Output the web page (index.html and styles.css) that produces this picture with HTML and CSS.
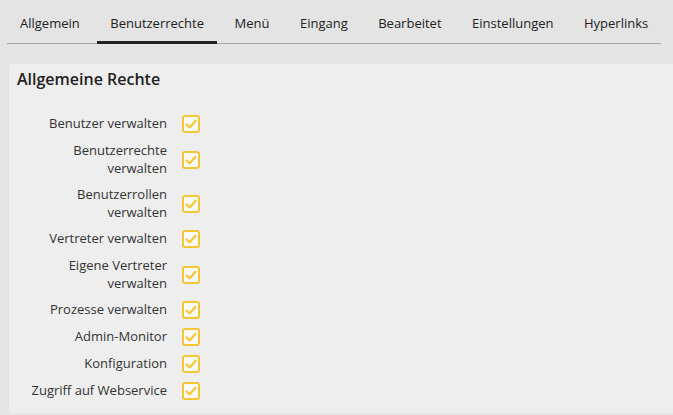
FILE: index.html
```html
<!DOCTYPE html>
<html lang="de">
<head>
    <meta charset="UTF-8">
    <meta name="viewport" content="width=device-width, initial-scale=1.0">
    <title>Benutzerrechte</title>
    <link rel="stylesheet" href="styles.css">
</head>
<body>
    <nav class="tabs">
        <a class="tab">Allgemein</a>
        <a class="tab active">Benutzerrechte</a>
        <a class="tab">Menü</a>
        <a class="tab">Eingang</a>
        <a class="tab">Bearbeitet</a>
        <a class="tab">Einstellungen</a>
        <a class="tab">Hyperlinks</a>
    </nav>

    <section class="panel">
        <h2>Allgemeine Rechte</h2>

        <div class="rights">
            <div class="right-row">
                <span class="right-label">Benutzer verwalten</span>
                <span class="check"><svg viewBox="0 0 14 14"><polyline points="2.5,7.5 5.8,10.3 11.5,3.8"/></svg></span>
            </div>
            <div class="right-row">
                <span class="right-label">Benutzerrechte verwalten</span>
                <span class="check"><svg viewBox="0 0 14 14"><polyline points="2.5,7.5 5.8,10.3 11.5,3.8"/></svg></span>
            </div>
            <div class="right-row">
                <span class="right-label">Benutzerrollen verwalten</span>
                <span class="check"><svg viewBox="0 0 14 14"><polyline points="2.5,7.5 5.8,10.3 11.5,3.8"/></svg></span>
            </div>
            <div class="right-row">
                <span class="right-label">Vertreter verwalten</span>
                <span class="check"><svg viewBox="0 0 14 14"><polyline points="2.5,7.5 5.8,10.3 11.5,3.8"/></svg></span>
            </div>
            <div class="right-row">
                <span class="right-label">Eigene Vertreter verwalten</span>
                <span class="check"><svg viewBox="0 0 14 14"><polyline points="2.5,7.5 5.8,10.3 11.5,3.8"/></svg></span>
            </div>
            <div class="right-row">
                <span class="right-label">Prozesse verwalten</span>
                <span class="check"><svg viewBox="0 0 14 14"><polyline points="2.5,7.5 5.8,10.3 11.5,3.8"/></svg></span>
            </div>
            <div class="right-row">
                <span class="right-label">Admin-Monitor</span>
                <span class="check"><svg viewBox="0 0 14 14"><polyline points="2.5,7.5 5.8,10.3 11.5,3.8"/></svg></span>
            </div>
            <div class="right-row">
                <span class="right-label">Konfiguration</span>
                <span class="check"><svg viewBox="0 0 14 14"><polyline points="2.5,7.5 5.8,10.3 11.5,3.8"/></svg></span>
            </div>
            <div class="right-row">
                <span class="right-label">Zugriff auf Webservice</span>
                <span class="check"><svg viewBox="0 0 14 14"><polyline points="2.5,7.5 5.8,10.3 11.5,3.8"/></svg></span>
            </div>
        </div>
    </section>
</body>
</html>
```

FILE: styles.css
```css
* {
    margin: 0;
    padding: 0;
    box-sizing: border-box;
}

body {
    font-family: 'Open Sans', 'Liberation Sans', sans-serif;
    font-size: 13px;
    background: #e4e4e4;
    color: #333;
}

.tabs {
    display: flex;
    gap: 4.5px;
    margin: 0 12px 0 7px;
    border-bottom: 1px solid #a8a8a8;
}

.tab {
    padding: 14px 13px 9px;
    line-height: 18px;
    color: #222;
    border-bottom: 3px solid transparent;
    margin-bottom: -1px;
    cursor: pointer;
}

.tab.active {
    border-bottom-color: #222;
}

.panel {
    background: #eeeeee;
    margin: 20px 0 3px 9px;
    border-radius: 4px 0 0 4px;
    padding: 4px 8px 13px;
}

.panel h2 {
    font-size: 16px;
    font-weight: 600;
    line-height: 22px;
    color: #222;
}

.rights {
    display: flex;
    flex-direction: column;
    gap: 9px;
    margin-top: 25px;
}

.right-row {
    display: flex;
    align-items: center;
    gap: 15px;
}

.right-label {
    width: 150px;
    padding-left: 12px;
    text-align: right;
    line-height: 17.5px;
    color: #333;
}

.check {
    width: 18px;
    height: 18px;
    border: 2px solid #f7c531;
    border-radius: 3px;
    background: #fbfbfb;
    display: flex;
    align-items: center;
    justify-content: center;
}

.check svg {
    width: 14px;
    height: 14px;
    fill: none;
    stroke: #f7c531;
    stroke-width: 2.2;
    stroke-linecap: round;
    stroke-linejoin: round;
}
```
